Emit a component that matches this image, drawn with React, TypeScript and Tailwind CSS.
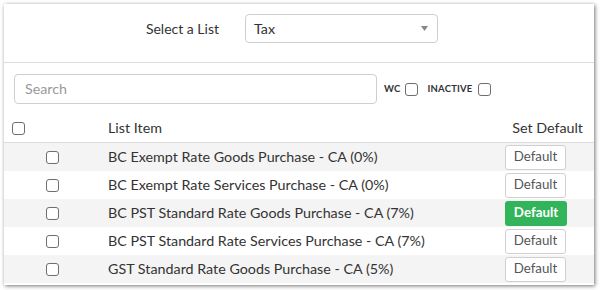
import React from "react";

const Box = () => (
  <span className="inline-block w-[13px] h-[13px] border border-[#6e6e6e] rounded-[3px] bg-white" />
);

const rows = [
  { name: "BC Exempt Rate Goods Purchase - CA (0%)", active: false },
  { name: "BC Exempt Rate Services Purchase - CA (0%)", active: false },
  { name: "BC PST Standard Rate Goods Purchase - CA (7%)", active: true },
  { name: "BC PST Standard Rate Services Purchase - CA (7%)", active: false },
  { name: "GST Standard Rate Goods Purchase - CA (5%)", active: false },
];

export default function App() {
  return (
    <div
      className="w-[602px] h-[290px] bg-white overflow-hidden pt-[4px] pl-[4px]"
      style={{ fontFamily: "Lato, 'Open Sans', sans-serif" }}
    >
      <div className="w-[590px] h-[281px] bg-white shadow-[1px_1px_4px_rgba(0,0,0,0.55)] text-[#333] flex flex-col">
        <div className="h-[59px] border-b border-[#dcdcdc] flex items-start pt-[10px]">
          <div className="w-[241px] h-[29px] flex items-center justify-end pr-[26px] text-[14px] text-[#333]">
            Select a List
          </div>
          <div className="w-[193px] h-[29px] border border-[#cfcfcf] rounded-[4px] flex items-center justify-between pl-[8px] pr-[9px] text-[14.3px]">
            <span>Tax</span>
            <svg width="7" height="5" viewBox="0 0 7 5">
              <path d="M0 0 L7 0 L3.5 5 Z" fill="#888" />
            </svg>
          </div>
        </div>
        <div className="flex items-center mt-[11px] pl-[10px] h-[30px]">
          <div className="w-[363px] h-[30px] border border-[#cfcfcf] rounded-[4px] flex items-center pl-[10px] text-[14.3px] text-[#9a9a9a]">
            Search
          </div>
          <span className="ml-[7px] text-[9.5px] font-bold tracking-[0.2px] text-[#333] mt-[1px]">WC</span>
          <span className="ml-[4px] flex"><Box /></span>
          <span className="ml-[10px] text-[9.5px] font-bold tracking-[0.2px] text-[#333] mt-[1px]">INACTIVE</span>
          <span className="ml-[5px] flex"><Box /></span>
        </div>
        <div className="flex items-center h-[39px] border-b border-[#dcdcdc] text-[14.3px] pt-[10px]">
          <div className="w-[104px] pl-[8px] flex items-center"><Box /></div>
          <div className="flex-1">List Item</div>
          <div className="w-[90px] text-right pr-[11px] whitespace-nowrap">Set Default</div>
        </div>
        {rows.map((r, i) => (
          <div
            key={i}
            className={`flex items-center h-[28px] text-[14.3px] ${i % 2 === 0 ? "bg-[#f4f4f4]" : "bg-white"}`}
          >
            <div className="w-[104px] pl-[42px] flex items-center"><Box /></div>
            <div className="flex-1 whitespace-nowrap">{r.name}</div>
            <div className="w-[90px] pl-[1px] flex items-center">
              {r.active ? (
                <div className="w-[62px] h-[25px] rounded-[3px] bg-[#32b55a] text-white font-bold text-[13.3px] flex items-center justify-center">
                  Default
                </div>
              ) : (
                <div className="w-[61px] h-[25px] rounded-[3px] border border-[#d0d0d0] bg-white text-[#555] text-[13.3px] flex items-center justify-center">
                  Default
                </div>
              )}
            </div>
          </div>
        ))}
      </div>
    </div>
  );
}
